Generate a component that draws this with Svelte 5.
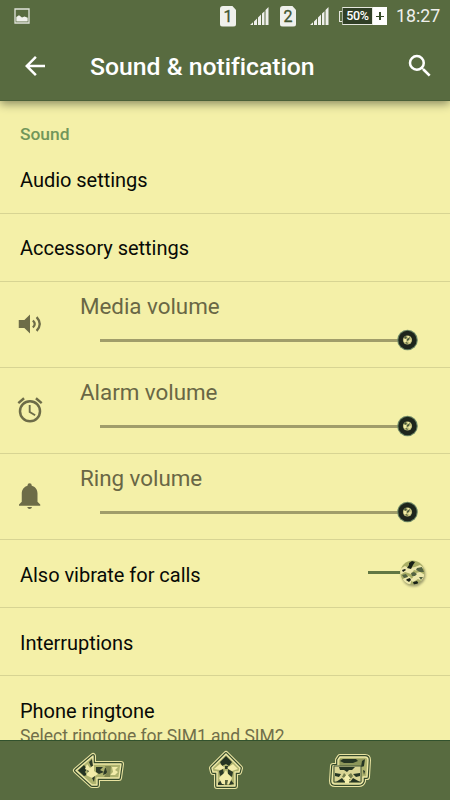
<script lang="ts">
  const volumes = [
    { label: 'Media volume', icon: 'speaker' },
    { label: 'Alarm volume', icon: 'alarm' },
    { label: 'Ring volume', icon: 'bell' },
  ];

  const SIMS = ['1', '2'];

  let vibrate = $state(true);
</script>

<div class="screen">
  <header>
    <div class="status">
      <svg class="photo" width="16" height="16" viewBox="0 0 16 16">
        <path d="M1 1H15V15H1Z" fill="none" stroke="#e0e4da" stroke-width="1.3" />
        <path d="M2.3 13.5V9L5 7.3L8 9.6L10.5 8.5L13.7 9.8V13.5Z" fill="#f0f1ec" />
      </svg>
      <div class="indicators">
        {#each SIMS as sim}
          <span class="sim">{sim}</span>
          <svg class="signal" width="20" height="20" viewBox="0 0 20 20">
            <path d="M1 19L4 16.2V19ZM5 15.4L8 12.5V19H5ZM9 11.5L12 8.5V19H9ZM13 7.6L15.5 5.2V19H13ZM16.5 4L19.5 1V19H16.5Z" fill="#eff0ec" />
          </svg>
        {/each}
        <div class="battery">
          <i class="tip"></i>
          <span class="level">50%</span>
          <span class="charge"></span>
        </div>
        <time>18:27</time>
      </div>
    </div>

    <div class="toolbar">
      <button aria-label="Back">
        <svg width="30" height="30" viewBox="0 0 24 24">
          <path d="M20 11H7.83l5.59-5.59L12 4l-8 8 8 8 1.41-1.41L7.83 13H20v-2z" fill="#fff" />
        </svg>
      </button>
      <h1>Sound &amp; notification</h1>
      <button aria-label="Search">
        <svg width="30" height="30" viewBox="0 0 24 24">
          <path d="M15.5 14h-.79l-.28-.27A6.47 6.47 0 0 0 16 9.5 6.5 6.5 0 1 0 9.5 16c1.61 0 3.09-.59 4.23-1.57l.27.28v.79l5 4.99L20.49 19l-4.99-5zm-6 0a4.5 4.5 0 1 1 0-9 4.5 4.5 0 0 1 0 9z" fill="#fff" />
        </svg>
      </button>
    </div>
  </header>

  <main>
    <h2>Sound</h2>
    <div class="row first">Audio settings</div>
    <div class="row first">Accessory settings</div>

    {#each volumes as v}
      <div class="volume">
        <svg class="vol-icon" width="30" height="30" viewBox="0 0 24 24" fill="#6d6c48">
          {#if v.icon === 'speaker'}
            <path d="M3 8.8V15.2H7.5L12 19.6V4.4L7.5 8.8Z" />
            <path d="M14.3 9.2Q17.3 12 14.3 14.8M17.3 6.5Q22.3 12 17.3 17.5" fill="none" stroke="#6d6c48" stroke-width="1.8" />
          {:else if v.icon === 'alarm'}
            <path d="M22 5.72l-4.6-3.86-1.29 1.53 4.6 3.86L22 5.72zM7.88 3.39L6.6 1.86 2 5.71l1.29 1.53 4.59-3.85zM12.5 8H11v6l4.75 2.85.75-1.23-4-2.37V8zM12 4a9 9 0 1 0 0 18 9 9 0 0 0 0-18zm0 16a7 7 0 1 1 0-14 7 7 0 0 1 0 14z" />
          {:else}
            <path d="M9.8 20.8h3.8c-.2 1-1 1.5-1.9 1.5s-1.7-.5-1.9-1.5zM18 16.5V10c0-3.1-1.8-5.4-4.6-6.2V3.5a1.7 1.7 0 0 0-3.4 0v.3C7.2 4.6 5.4 7 5.4 10v6.5L3.2 18.7v1h17v-1z" />
          {/if}
        </svg>
        <div class="control">
          <span class="label">{v.label}</span>
          <div class="track">
            <svg class="thumb" width="22" height="22" viewBox="0 0 22 22">
              <circle cx="11.5" cy="11" r="10.3" fill="#6d8765" />
              <circle cx="11.5" cy="11" r="9.2" fill="#1d251c" />
              <circle cx="11.5" cy="11" r="4.6" fill="#c5c27e" />
              <path d="M8 8L10 7L11 9L9 10ZM11 10L14 8L13 11L11 12ZM9 14L11 13L12 15Z" fill="#4b5b3b" />
              <path d="M8 10H10V13H8ZM12 12L15 11L14 14ZM11 7H13V9Z" fill="#f2edaa" />
            </svg>
          </div>
        </div>
      </div>
    {/each}

    <div class="row">
      <span>Also vibrate for calls</span>
      <button class="switch" role="switch" aria-checked={vibrate} aria-label="Vibrate" onclick={() => (vibrate = !vibrate)}>
        <i class:off={!vibrate}></i>
        <svg width="26" height="26" viewBox="0 0 26 26">
          <clipPath id="ball"><circle cx="12.5" cy="12.5" r="12" /></clipPath>
          <g clip-path="url(#ball)">
            <path d="M0 0H26V26H0Z" fill="#a9ae66" />
            <path d="M0 9L5 6L9 8L15 7L20 5L24 8L18 11L14 10L11 14L5 12L0 15ZM3 19L9 16L12 19L10 25H4ZM16 13L20 12L25 15L22 21L18 19L13 22L11 20Z" fill="#ede8ac" />
            <path d="M9 3L12 1L15 2L13 5L11 9L7 8L9 5ZM2 10L5 9L6 10L3 12ZM7 19L10 18L11 20L9 22L6 20ZM13 22L17 21L19 24L14 25Z" fill="#182117" />
            <path d="M17 8L22 7L24 12L20 12L16 10ZM11 13L14 12L17 14L15 16L12 16ZM2 15L6 14L8 17L4 18ZM19 17L23 17L21 20Z" fill="#536342" />
          </g>
        </svg>
      </button>
    </div>
    <div class="row">Interruptions</div>
    <div class="ringtone">
      <span>Phone ringtone</span>
      <small>Select ringtone for SIM1 and SIM2</small>
    </div>
  </main>

  <nav>
    <button aria-label="Back">
      <svg width="54" height="38" viewBox="0 0 54 38">
        <path class="rim" d="M4 18.5L21 4V12H49L47 26H25V33H20Z" />
        <path class="groove" d="M4 18.5L21 4V12H49L47 26H25V33H20Z" />
        <path class="body" d="M4 18.5L21 4V12H49L47 26H25V33H20Z" />
        <path d="M6 18.5L12 13L15 17L13 20L15 23L12 24Z" fill="#243322" />
        <path d="M17 10L20 7L21 14L19 15ZM15 17L18 18L16 21ZM19 24L23 24L22 30ZM24 15H31L28 18L32 20L27 22L24 20ZM33 16L38 15L36 21L31 23Z" fill="#2c3a27" />
        <path d="M15 12L18 16L22 13V19L26 22L20 26L14 23L17 19L13 17ZM40 15H46L43 18L46 20L43 23H38L41 20Z" fill="#f2eca9" />
        <path d="M33 14H39L38 25H32L35 20Z" fill="#7e8650" />
      </svg>
    </button>
    <button aria-label="Home">
      <svg width="38" height="44" viewBox="0 0 38 44">
        <path class="rim" d="M19 5L33 19L32 23H28V37H10V23H6L5 19Z" />
        <path class="groove" d="M19 5L33 19L32 23H28V37H10V23H6L5 19Z" />
        <path class="body" d="M19 5L33 19L32 23H28V37H10V23H6L5 19Z" />
        <path d="M19 7L25 13L22 17L19 15L15 17L13 13Z" fill="#243322" />
        <path d="M12 22L16 20L17 25L13 27ZM21 20L26 23L25 28L21 25ZM18 17H21V20H18ZM11 34L14 31L17 36H11ZM22 36L24 31L27 35Z" fill="#2c3a27" />
        <path d="M7 20L13 15L18 19L13 21ZM20 19L26 15L31 20L25 22ZM17 24L19 21L21 25L25 29L22 35H15L12 29Z" fill="#f2eca9" />
        <path d="M18 31H21L20 36H18Z" fill="#59643d" />
      </svg>
    </button>
    <button aria-label="Recent apps">
      <svg width="44" height="36" viewBox="0 0 44 36">
        <path class="rim" d="M12 4H37Q40 4 40 7L39 24H35V28Q34 31 31 31H7Q4 31 4 28L5 13H10V7Z" />
        <path class="groove" d="M12 4H37Q40 4 40 7L39 24H35V28Q34 31 31 31H7Q4 31 4 28L5 13H10V7Z" />
        <path class="body" d="M12 4H37Q40 4 40 7L39 24H35V28Q34 31 31 31H7Q4 31 4 28L5 13H10V7Z" />
        <path d="M12 6H36V14H12Z" fill="#8c965a" />
        <path d="M15 6H28L30 8L25 10H16L12 8ZM34 8L37 6L36 13L33 14ZM35 17L37 18L36 22Z" fill="#253523" />
        <path d="M6 13H33V29H6Z" fill="#d9d594" stroke="#44563a" />
        <path d="M11 14H27L24 17H21L19 19L16 17H12ZM7 20L13 21L11 24L7 23ZM32 20L25 21L28 24L32 23ZM8 29L14 25L17 29ZM22 29L25 25L32 29Z" fill="#253523" />
        <path d="M16 20L19 23L23 20L25 23L22 27L14 24Z" fill="#747d4b" />
        <path d="M19 21L23 26H21V30H17V26H15Z" fill="#f4efad" />
      </svg>
    </button>
  </nav>
</div>

<style>
  :global(body) { margin: 0; overflow: hidden; }
  .screen {
    width: 450px;
    height: 800px;
    display: flex;
    flex-direction: column;
    overflow: hidden;
    background: #f4f0a8;
    color: #080a05;
    font: 20px/24px Roboto, sans-serif;
    letter-spacing: -0.03px;
  }
  button { padding: 0; border: 0; background: none; cursor: pointer; }
  svg { display: block; }
  header {
    box-sizing: border-box;
    height: 101px;
    flex: none;
    background: #586b40;
    border-bottom: 1px solid #4b6038;
    box-shadow: 0 3px 9px #8a8b60;
    color: #fff;
    z-index: 1;
  }
  .status { height: 32px; display: flex; justify-content: space-between; align-items: center; padding: 0 10px 0 14px; }
  .indicators { display: flex; align-items: center; }
  .sim {
    width: 16px;
    height: 21px;
    margin-right: 13px;
    border-radius: 3px;
    clip-path: polygon(0 0, 75% 0, 100% 22%, 100% 100%, 0 100%);
    background: #eff0ec;
    color: #40552f;
    font-size: 16px;
    line-height: 22px;
    text-align: center;
    -webkit-text-stroke: 0.3px #40552f;
  }
  .signal { margin-right: 11px; }
  .battery { display: flex; align-items: center; margin: 0 9px 0 -1px; }
  .tip { box-sizing: border-box; width: 3px; height: 11px; border: 1px solid #e6e8df; border-right: 0; }
  .level {
    box-sizing: border-box;
    width: 31px;
    height: 18px;
    border: 1px solid #e6e8df;
    border-left-color: #a5ad98;
    background: #303f26;
    color: #fff;
    font-size: 12.5px;
    font-weight: 500;
    line-height: 16px;
    letter-spacing: -0.3px;
    text-align: center;
  }
  .charge {
    width: 14px;
    height: 18px;
    background:
      linear-gradient(#354a27, #354a27) center / 8px 1px no-repeat,
      linear-gradient(#354a27, #354a27) center / 2px 8px no-repeat,
      #fff;
  }
  time { width: 44px; color: #eff0ec; font-size: 17.8px; white-space: nowrap; }
  .toolbar { height: 68px; display: flex; align-items: center; padding: 0 15px 0 20px; }
  h1 { flex: 1; margin: 1px 0 0 40px; font-size: 24.8px; font-weight: 500; line-height: 30px; white-space: nowrap; }
  main { flex: 1; min-height: 0; overflow: hidden; }
  h2 { margin: 21px 20px 0; color: #71965a; font-size: 17.4px; font-weight: 500; line-height: 24px; }
  .row {
    box-sizing: border-box;
    height: 68px;
    display: flex;
    align-items: center;
    justify-content: space-between;
    padding: 2px 20px 0;
    border-bottom: 1px solid #d7d493;
  }
  .row.first { padding-top: 0; }
  .volume { box-sizing: border-box; height: 86px; display: flex; align-items: center; padding: 0 32px 0 15px; border-bottom: 1px solid #d7d493; }
  .vol-icon { margin-top: -1px; }
  .control { flex: 1; margin-left: 35px; align-self: stretch; }
  .label { display: block; margin-top: 10px; color: #696745; font-size: 22.4px; line-height: 28px; }
  .track {
    display: flex;
    align-items: center;
    justify-content: flex-end;
    height: 22px;
    margin: 9px 0 0 20px;
    background: linear-gradient(#a09d6a, #a09d6a) left / calc(100% - 12px) 3px no-repeat;
  }
  .switch { display: flex; align-items: center; margin: -4px 4px 0 0; }
  .switch i { width: 32px; height: 3px; background: #617743; }
  .switch i.off { background: #a09d6a; }
  .switch svg { filter: drop-shadow(1px 2px 1px #6b6d4b99); }
  .ringtone { display: flex; flex-direction: column; padding: 23px 20px 0; }
  small { color: #716f4a; font-size: 17.5px; line-height: 26px; }
  nav {
    box-sizing: border-box;
    height: 60px;
    flex: none;
    display: flex;
    align-items: center;
    justify-content: space-between;
    padding: 0 78px 0 72px;
    border-top: 1px solid #31522d;
    background: #586b40;
  }
  nav button:nth-child(2) { margin-right: 3px; }
  nav path { stroke-linejoin: round; }
  .rim { fill: #e7e2a0; stroke: #e7e2a0; stroke-width: 6; }
  .groove { fill: none; stroke: #364b2b; stroke-width: 3.8; }
  .body { fill: #aeb36e; stroke: #eee9a7; stroke-width: 1.4; }
</style>
